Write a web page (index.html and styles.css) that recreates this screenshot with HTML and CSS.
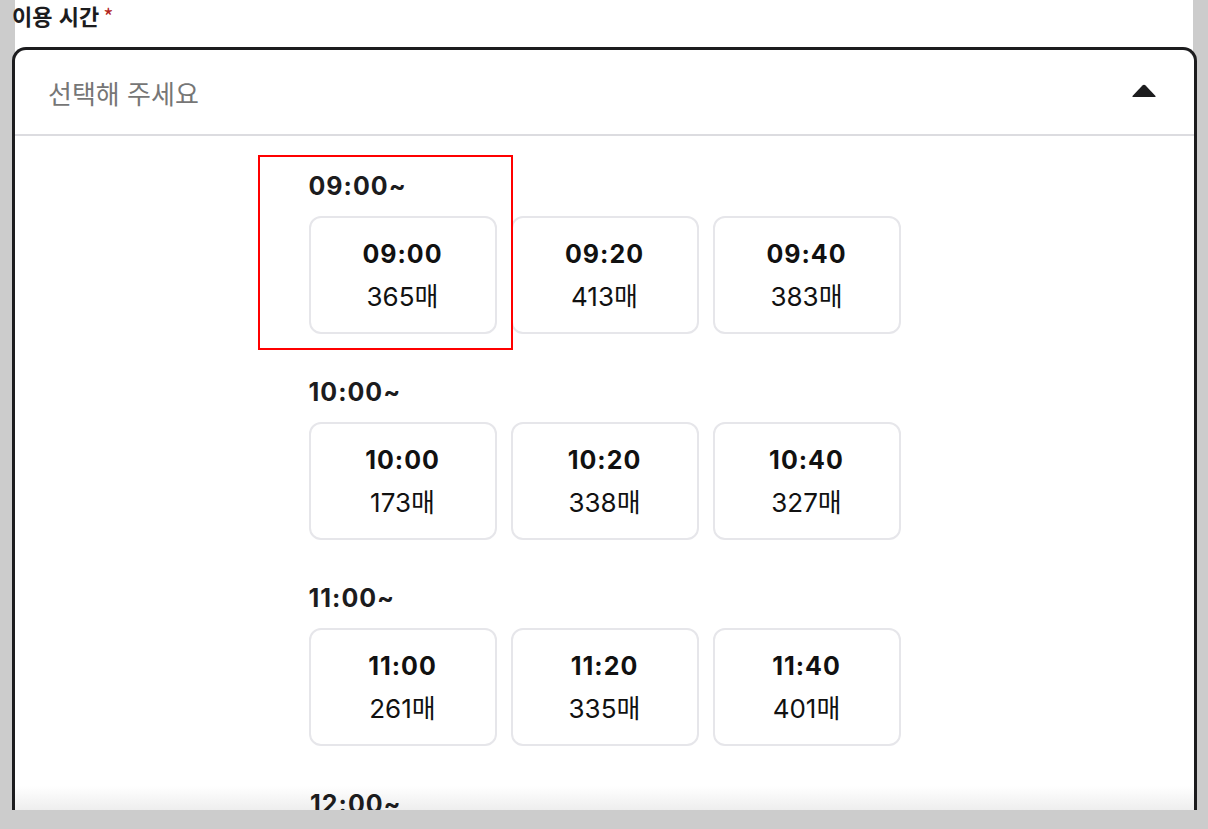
FILE: index.html
```html
<!DOCTYPE html>
<html lang="ko">

<head>
    <meta charset="UTF-8">
    <meta name="viewport" content="width=device-width, initial-scale=1.0">
    <title>이용 시간</title>
    <link rel="stylesheet" href="styles.css">
</head>

<body>
    <div class="sheet">
        <div class="field">
            <label class="field-label">이용 시간<span class="required">*</span></label>

            <div class="select open">
                <div class="select-head">
                    <span class="placeholder">선택해 주세요</span>
                    <svg class="caret" width="26" height="14" viewBox="0 0 26 14">
                        <path d="M11.4 1.4 Q13 0 14.6 1.4 L24.5 12 Q25 13 24 13 L2 13 Q1 13 1.5 12 Z" fill="#1c1c1e"/>
                    </svg>
                </div>

                <div class="select-list">
                    <div class="time-group">
                        <div class="highlight"></div>
                        <h3 class="group-title">09:00~</h3>
                        <div class="slots">
                            <button class="slot"><span class="slot-time">09:00</span><span class="slot-count">365매</span></button>
                            <button class="slot"><span class="slot-time">09:20</span><span class="slot-count">413매</span></button>
                            <button class="slot"><span class="slot-time">09:40</span><span class="slot-count">383매</span></button>
                        </div>
                    </div>

                    <div class="time-group">
                        <h3 class="group-title">10:00~</h3>
                        <div class="slots">
                            <button class="slot"><span class="slot-time">10:00</span><span class="slot-count">173매</span></button>
                            <button class="slot"><span class="slot-time">10:20</span><span class="slot-count">338매</span></button>
                            <button class="slot"><span class="slot-time">10:40</span><span class="slot-count">327매</span></button>
                        </div>
                    </div>

                    <div class="time-group">
                        <h3 class="group-title">11:00~</h3>
                        <div class="slots">
                            <button class="slot"><span class="slot-time">11:00</span><span class="slot-count">261매</span></button>
                            <button class="slot"><span class="slot-time">11:20</span><span class="slot-count">335매</span></button>
                            <button class="slot"><span class="slot-time">11:40</span><span class="slot-count">401매</span></button>
                        </div>
                    </div>

                    <div class="time-group">
                        <h3 class="group-title">12:00~</h3>
                    </div>
                </div>
            </div>
        </div>
    </div>
</body>

</html>
```

FILE: styles.css
```css
body {
    margin: 0;
    background-color: #cccccc;
    font-family: Inter, "Noto Sans CJK KR", sans-serif;
    color: #111;
    height: 829px;
    overflow: hidden;
}

.sheet {
    margin: 15px 15px 0 15px;
    height: 799px;
    background-color: #fff;
}

.field {
    margin: -15px -4px 0 -3px;
}

.field-label {
    display: block;
    height: 30px;
    line-height: 30px;
    margin-bottom: 17px;
    font-size: 22px;
    font-weight: 700;
    color: #1c1c1e;
    font-family: "Noto Sans CJK KR", sans-serif;
}

.required {
    color: #b3261e;
    margin-left: 4px;
    font-weight: 400;
}

.select {
    position: relative;
    height: 763px;
    border: 3px solid #1c1c1e;
    border-bottom: 0;
    border-radius: 14px 14px 0 0;
    overflow: hidden;
    box-sizing: border-box;
    background-color: #fff;
}

/* fade at the bottom of the scrolling list */
.select::after {
    content: "";
    position: absolute;
    left: 0;
    right: 0;
    bottom: 0;
    height: 24px;
    background: linear-gradient(rgba(240, 240, 240, 0), #eeeeee);
    z-index: 0;
}

.select-head {
    display: flex;
    align-items: center;
    justify-content: space-between;
    height: 84px;
    padding: 0 37px 0 33px;
    border-bottom: 2px solid #dcdce0;
}

.placeholder {
    font-size: 26px;
    color: #767676;
    font-family: "Noto Sans CJK KR", sans-serif;
}

.caret {
    display: block;
    margin-top: -2px;
}

.select-list {
    position: relative;
    z-index: 1;
    display: flex;
    flex-direction: column;
    align-items: center;
    padding-top: 35px;
}

.time-group {
    position: relative;
    margin-bottom: 43px;
}

.time-group:last-child {
    align-self: stretch;
    padding-left: 295px;
}

.highlight {
    position: absolute;
    top: -16px;
    left: -51px;
    width: 255px;
    height: 195px;
    border: 2px solid #ff0000;
    box-sizing: border-box;
    pointer-events: none;
}

.group-title {
    margin: 0 0 15px 0;
    height: 30px;
    line-height: 30px;
    font-size: 25px;
    font-weight: 700;
    letter-spacing: 1px;
    color: #1c1c1e;
}

.slots {
    display: flex;
    gap: 14px;
}

.slot {
    width: 188px;
    height: 118px;
    display: flex;
    flex-direction: column;
    align-items: center;
    justify-content: center;
    gap: 13px;
    background-color: #fff;
    border: 2px solid #e6e6ea;
    border-radius: 12px;
    padding: 0;
    font-family: Inter, "Noto Sans CJK KR", sans-serif;
    color: #111;
    cursor: pointer;
}

.slot-time {
    line-height: 30px;
    font-size: 25px;
    font-weight: 700;
    letter-spacing: 1px;
}

.slot-count {
    line-height: 30px;
    font-size: 26px;
    font-weight: 400;
}
```
